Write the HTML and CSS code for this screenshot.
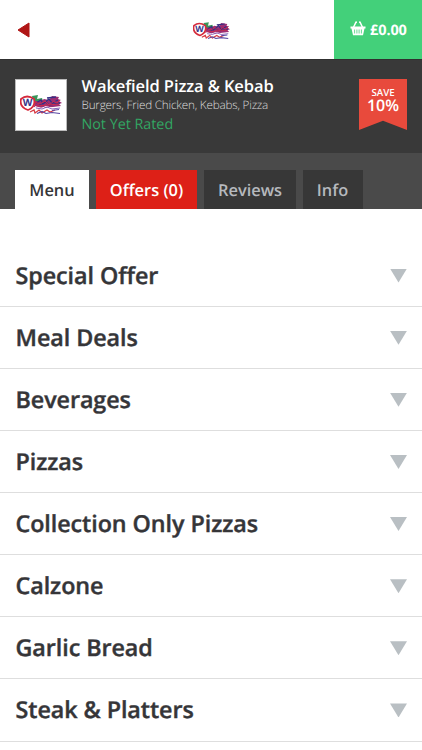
FILE: index.html
```
<!DOCTYPE html>
<html lang="en">
<head>
<meta charset="utf-8">
<meta name="viewport" content="width=device-width">
<title>Wakefield Pizza &amp; Kebab</title>
<link rel="stylesheet" href="styles.css">
</head>
<body>
<header class="topbar">
  <svg class="back" viewBox="0 0 13 16"><path d="M12 1v14L1 8z" fill="#b01616" stroke="#b01616" stroke-linejoin="round"/></svg>
  <svg class="brand" viewBox="0 0 42 20">
    <g id="logo-art">
      <path d="M12 1l6-1-1 4 5-1 1 3-9 3z" fill="#38965a"/>
      <path d="M15 6h6l3-2 5 1 3-4 7 1-1 2 3 1-2 1 3 2-3 1 2 2-8 1-9 1-10-1z" fill="#9c2e74"/>
      <path d="M16 8l5-3 2 4 6-5 3 4 6-3M27 3l9-1M19 10l7-3 3 3 11-2" fill="none" stroke="#353084" stroke-width="1.3"/>
      <path d="M15 7l5 2 5-3 4 4 5-4 3 2 3-3M16 11l23-2" fill="none" stroke="#d02a4c"/>
      <path d="M15 11.500l6 2 5-2 7 2 6-1" fill="none" stroke="#fff" stroke-width="1"/>
      <path d="M16 13l6 1 5-2 5 2 8-1" fill="none" stroke="#7a4db0" stroke-width=".9"/>
      <path d="M10 17l4-2 1 3 4-3 3 3 5-3 3 2 5-2" fill="none" stroke="#d83a44" stroke-width="1.300"/>
      <path d="M17 18.500l5-2 4 2 6-1 8 1M32 15.500l7-1" fill="none" stroke="#5947a2" stroke-width="1.200"/>
      <path d="M1 4Q7-1 14 4Q16 12 8 15Q-1 12 1 4z" fill="#fff" stroke="#d52a3c" stroke-width="1.800"/>
    </g>
    <text x="2.700" y="11.400" class="logo-letter">W</text>
  </svg>
  <div class="basket">
    <svg class="basket-icon" viewBox="0 0 16 15" fill="none" stroke="#fff">
      <path d="M3.400 6.500L6 1.200M12.600 6.500L10 1.200" stroke-width="1.500" stroke-linecap="round"/>
      <path d="M5.700 1.200h1.200M9.100 1.200h1.200" stroke-width="1.400"/>
      <path d="M.5 5.500h15v2h-1l-1.500 6.800H3L1.500 7.500h-1z" fill="#fff" stroke="none"/>
      <path d="M4.600 8.500v4M6.900 8.500v4M9.100 8.500v4M11.400 8.500v4" stroke="#43d07a" stroke-width=".8"/>
    </svg>
    <span>£0.00</span>
  </div>
</header>
<section class="restaurant">
  <div class="thumb"><svg viewBox="0 0 42 20"><use href="#logo-art"/><text x="2.700" y="11.400" class="logo-letter">W</text></svg></div>
  <div class="details">
    <h1>Wakefield Pizza &amp; Kebab</h1>
    <p class="cuisines">Burgers, Fried Chicken, Kebabs, Pizza</p>
    <p class="rating">Not Yet Rated</p>
  </div>
  <div class="ribbon"><span class="save">SAVE</span><span class="percent">10%</span></div>
</section>
<nav class="tabs">
  <a class="tab menu">Menu</a>
  <a class="tab offers">Offers (0)</a>
  <a class="tab reviews">Reviews</a>
  <a class="tab info">Info</a>
</nav>
<main>
  <div class="row"><h2>Special Offer</h2><i class="arrow"></i></div>
  <div class="row"><h2>Meal Deals</h2><i class="arrow"></i></div>
  <div class="row"><h2>Beverages</h2><i class="arrow"></i></div>
  <div class="row"><h2>Pizzas</h2><i class="arrow"></i></div>
  <div class="row"><h2>Collection Only Pizzas</h2><i class="arrow"></i></div>
  <div class="row"><h2>Calzone</h2><i class="arrow"></i></div>
  <div class="row"><h2>Garlic Bread</h2><i class="arrow"></i></div>
  <div class="row"><h2>Steak &amp; Platters</h2><i class="arrow"></i></div>
</main>
</body>
</html>
```
FILE: styles.css
```
* { box-sizing: border-box; margin: 0; padding: 0; }
body { font-family: "Open Sans", sans-serif; background: #fff; color: #353538; height: 750px; overflow: hidden; text-rendering: geometricPrecision; }
.logo-letter { font: 700 10px "Open Sans", sans-serif; fill: #38358b; }
.topbar { height: 59px; display: grid; grid-template-columns: 192px 1fr 88px; align-items: center; }
.back { width: 13px; height: 16px; margin: 1px 0 0 16.5px; }
.brand { width: 37px; height: 18px; margin: 2px 0 0 1px; }
.basket { height: 59px; background: #43d07a; color: #fff; display: flex; align-items: center; padding: 2px 0 0 16px; font-size: 14.5px; font-weight: 700; letter-spacing: -.1px; }
.basket-icon { width: 16px; height: 15px; margin: -4px 4px 0 0; }
.restaurant { height: 94px; background: #393939; border-top: 1px solid #303030; display: flex; padding: 19px 15px 0; }
.thumb { width: 52px; height: 52px; background: #fff; border: 1px solid #bbb; display: flex; align-items: center; justify-content: center; }
.thumb svg { width: 42px; height: 20px; }
.details { flex: 1; padding-left: 14.5px; white-space: nowrap; }
h1 { font-size: 16.5px; line-height: 22px; font-weight: 600; letter-spacing: -.1px; color: #fff; margin-top: -4px; }
.cuisines { font-size: 11.7px; line-height: 16px; font-weight: 300; letter-spacing: -.2px; color: #dcdcdc; }
.rating { font-size: 14.3px; line-height: 20px; margin-top: 2px; color: #32a663; }
.ribbon { width: 48px; height: 51px; background: #e84a3c; color: #fff; clip-path: polygon(0 0, 100% 0, 100% 100%, 50% 82%, 0 100%); display: flex; flex-direction: column; align-items: center; padding-top: 7px; }
.save { font-size: 9.7px; line-height: 13px; font-weight: 600; }
.percent { font-size: 16px; line-height: 13px; font-weight: 600; }
.tabs { height: 56px; background: #4a4a4a; display: flex; gap: 7px; padding: 17px 15px 0; }
.tab { height: 39px; line-height: 40px; text-align: center; font-size: 16.4px; font-weight: 600; background: #373737; color: #b6b9be; white-space: nowrap; }
.menu { width: 74px; background: #fff; color: #353538; }
.offers { width: 101px; background: #dd2017; color: #fff; }
.reviews { width: 92px; }
.info { width: 60px; padding-right: 1px; }
main { padding-top: 35.5px; }
.row { height: 62.14px; border-bottom: 1px solid #dedede; display: flex; align-items: center; justify-content: space-between; padding: 0 15px 0 15.5px; }
h2 { font-size: 23.3px; line-height: 30px; font-weight: 600; letter-spacing: -.06px; margin-top: -1px; -webkit-text-stroke: .4px #353538; }
.arrow { width: 17px; height: 14px; background: #b9bfc3; clip-path: polygon(0 0, 100% 0, 50% 100%); margin-top: 1px; }
```
